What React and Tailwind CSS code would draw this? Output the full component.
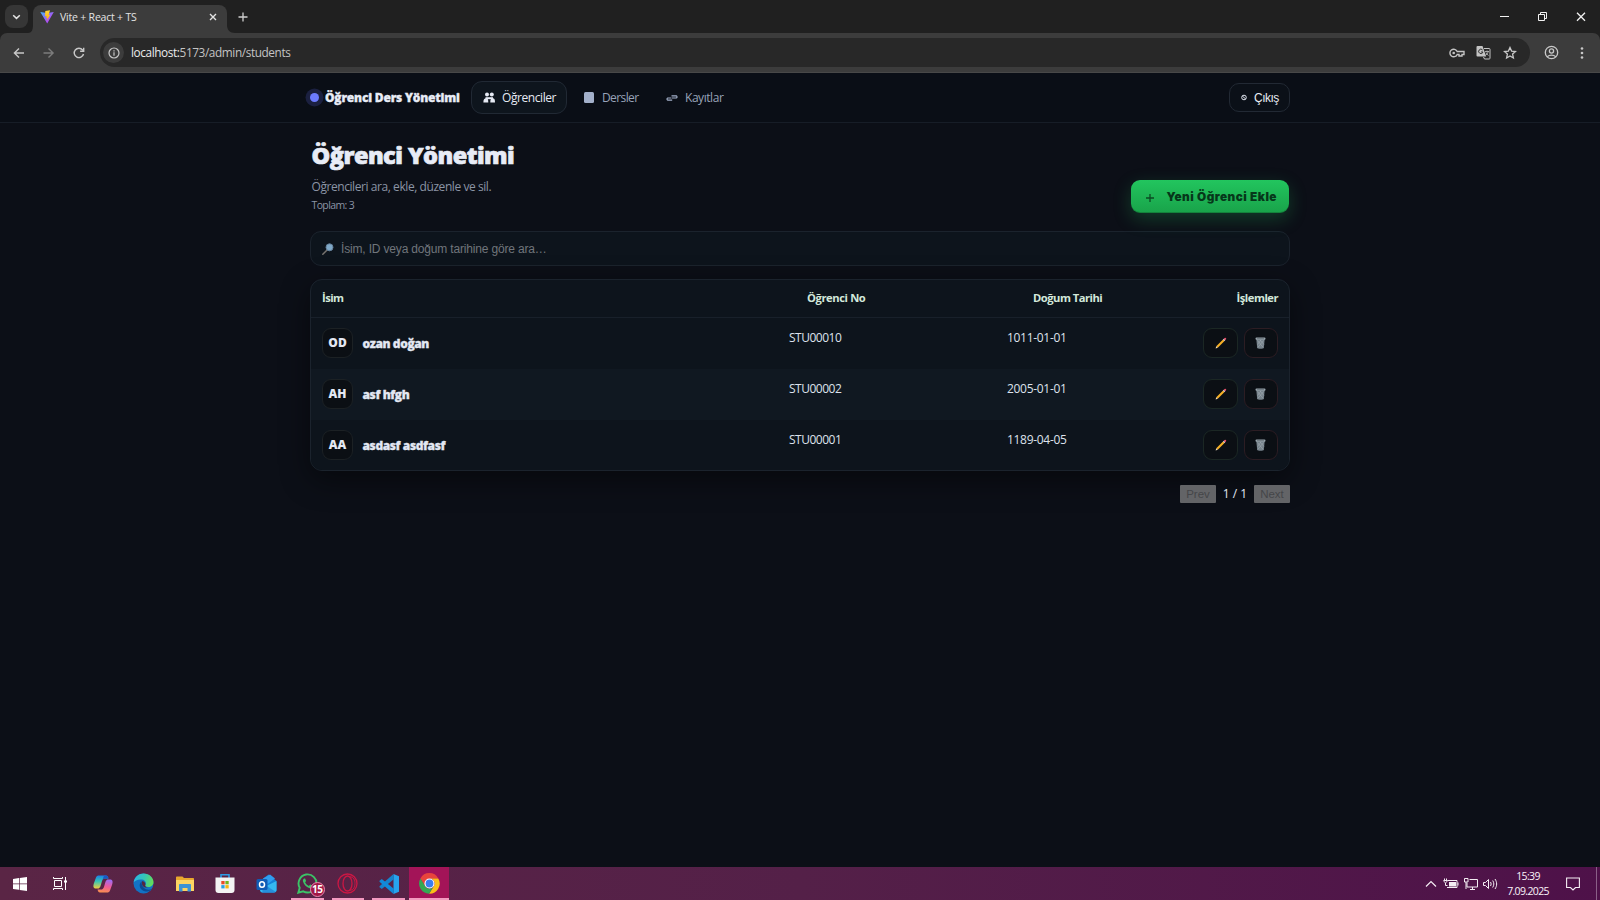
import React from "react";

const students = [
  { initials: "OD", name: "ozan doğan", no: "STU00010", birth: "1011-01-01" },
  { initials: "AH", name: "asf hfgh", no: "STU00002", birth: "2005-01-01" },
  { initials: "AA", name: "asdasf asdfasf", no: "STU00001", birth: "1189-04-05" },
];

function ViteLogo() {
  return (
    <svg width="14" height="14" viewBox="0 0 14 14">
      <defs>
        <linearGradient id="vt" x1="0" y1="0" x2="1" y2="1">
          <stop offset="0" stopColor="#41b6f5" />
          <stop offset="0.6" stopColor="#a855f7" />
          <stop offset="1" stopColor="#bd34fe" />
        </linearGradient>
        <linearGradient id="vy" x1="0" y1="0" x2="0" y2="1">
          <stop offset="0" stopColor="#ffd83b" />
          <stop offset="1" stopColor="#ffa800" />
        </linearGradient>
      </defs>
      <path d="M.3 2 7.2 13.6 13.8 2 7.3 3.1Z" fill="url(#vt)" />
      <path d="M10 .2 5.3 1.1 5 6.3l1.6-.3-.4 2.2 1.3-.4-.7 3.4 3.3-6.4-1.5.3Z" fill="url(#vy)" />
    </svg>
  );
}

function TabStrip() {
  return (
    <div className="flex h-[33px] items-start bg-[#202020]">
      <div className="ml-[5px] mt-[5px] flex h-[23px] w-[23px] items-center justify-center rounded-[8px] bg-[#363636]">
        <svg width="9" height="6" viewBox="0 0 9 6" fill="none" stroke="#e3e3e3" strokeWidth="1.5"><path d="m1.2 1.2 3.3 3.2 3.3-3.2" /></svg>
      </div>
      <svg className="mt-[25px]" width="5" height="8" viewBox="0 0 5 8"><path d="M5 0v8H0c3.500 0 5-3 5-8Z" fill="#3c3c3c" /></svg>
      <div className="mt-[5px] flex h-[28px] w-[194px] items-center rounded-t-[8px] bg-[#3c3c3c] pb-[4px] pl-[7px] pr-[10px]">
        <ViteLogo />
        <span className="ml-[6px] mt-[1px] grow whitespace-nowrap text-[10.5px] tracking-[-0.2px] text-[#e3e3e3]">Vite + React + TS</span>
        <svg width="8" height="8" viewBox="0 0 8 8" stroke="#e3e3e3" strokeWidth="1.4"><path d="m1 1 6 6M7 1 1 7" /></svg>
      </div>
      <svg className="mt-[25px]" width="8" height="8" viewBox="0 0 8 8"><path d="M0 0c0 5 3 8 8 8H0Z" fill="#3c3c3c" /></svg>
      <svg className="ml-[3px] mt-[12px]" width="10" height="10" viewBox="0 0 10 10" stroke="#cfcfcf" strokeWidth="1.3"><path d="M5 .5v9M.5 5h9" /></svg>
      <div className="grow" />
      <svg className="mt-[12px]" width="100" height="10" viewBox="0 0 100 10" fill="none" stroke="#f2f2f2" strokeWidth="1">
        <path d="M0 4.500h9" />
        <path d="M38.500 2.500h6v6h-6zM40.500 2.500v-2h6v6h-2" />
        <path d="m77 .8 8 8M85 .8l-8 8" strokeWidth="1.3" />
      </svg>
    </div>
  );
}

function Toolbar() {
  return (
    <div className="bg-[#202020]">
      <div className="flex h-[40px] items-center rounded-t-[7px] border-b border-[#484848] bg-[#3c3c3c]">
        <svg className="ml-[13px]" width="12" height="12" viewBox="0 0 12 12" fill="none" stroke="#c8c8c8" strokeWidth="1.4"><path d="M11 6H1.500M6 1.400 1.400 6 6 10.600" /></svg>
        <svg className="ml-[18px]" width="12" height="12" viewBox="0 0 12 12" fill="none" stroke="#7c7c7c" strokeWidth="1.4"><path d="M.5 6H10M5.500 1.400 10.100 6l-4.600 4.600" /></svg>
        <svg className="ml-[18px]" width="12" height="12" viewBox="0 0 12 12" fill="none" stroke="#c8c8c8" strokeWidth="1.4"><path d="M10.500 7A4.700 4.700 0 1 1 9.600 3l1 1" /><path d="M10.700.7v3.600H7.100" /></svg>
        <div className="ml-[15px] flex h-[29px] w-[1430px] items-center rounded-full bg-[#282828]">
          <div className="ml-[3px] flex h-[21px] w-[21px] items-center justify-center rounded-full bg-[#3c3c3c]">
            <svg width="12" height="12" viewBox="0 0 12 12" fill="none" stroke="#c8c8c8" strokeWidth="1.2"><circle cx="6" cy="6" r="5" /><path d="M6 5.300v3.400M6 3.200v1.300" /></svg>
          </div>
          <span className="ml-[7px] whitespace-nowrap text-[11.8px] tracking-[-0.4px] text-[#c4c4c4]"><span className="text-[#ececec]">localhost:</span>5173/admin/students</span>
          <div className="grow" />
          <svg width="16" height="10" viewBox="0 0 16 10" fill="none" stroke="#c4c4c4" strokeWidth="1.4"><path d="M8.200 3.500a3.800 3.800 0 1 0 0 3H10V8h3V6.500h2v-3Z" /><circle cx="4.700" cy="5" r="1.300" fill="#c4c4c4" stroke="none" /></svg>
          <svg className="ml-[11px]" width="15" height="15" viewBox="0 0 15 15">
            <path d="M1.500 1h5l3.700 10.500H1.500A1 1 0 0 1 .5 10.500V2a1 1 0 0 1 1-1Z" fill="#c4c4c4" />
            <path d="M8 3.500h5.200a.8.800 0 0 1 .8.800v8.900a.8.800 0 0 1-.8.800H8.500l-1-2" fill="none" stroke="#c4c4c4" />
            <path d="M6.600 5A2.200 2.200 0 1 0 7 7H5" fill="none" stroke="#333" strokeWidth="1" />
            <path d="M9 6.500h4M11 5.500v1M12.300 6.500c-.3 1.500-1.300 2.700-2.300 3.500M10 7.500c.5 1.300 1.400 2.200 2.500 3" fill="none" stroke="#c4c4c4" strokeWidth=".8" />
          </svg>
          <svg className="ml-[12px] mr-[13px]" width="14" height="14" viewBox="0 0 14 14" fill="none" stroke="#c8c8c8" strokeWidth="1.3"><path d="m7 1.500 1.600 3.600 3.900.4-2.900 2.600.8 3.900L7 10l-3.400 2 .8-3.900L1.500 5.500l3.900-.4Z" /></svg>
        </div>
        <svg className="ml-[14px]" width="15" height="15" viewBox="0 0 15 15" fill="none" stroke="#c8c8c8" strokeWidth="1.3"><circle cx="7.500" cy="7.500" r="6.200" /><circle cx="7.500" cy="6" r="2.100" /><path d="M3.200 11.800c2.400-2.200 6.200-2.200 8.600 0" /></svg>
        <svg className="ml-[21px]" width="4" height="14" viewBox="0 0 4 14" fill="#c8c8c8"><circle cx="2" cy="2.500" r="1.300" /><circle cx="2" cy="7" r="1.300" /><circle cx="2" cy="11.500" r="1.300" /></svg>
      </div>
    </div>
  );
}

function NavBar() {
  return (
    <header className="h-[50px] border-b border-[#171d27] bg-[#0a0e16]">
      <div className="mx-auto flex h-[49px] w-[980px] items-center">
        <div className="ml-[-0.500px] h-[9px] w-[9px] rounded-full bg-[#6c7bff] shadow-[0_0_0_4.500px_#1b2040]" />
        <span className="ml-[6.500px] w-[146px] whitespace-nowrap text-[12px] font-extrabold tracking-[-0.2px] text-[#e8ecf6] [-webkit-text-stroke:0.3px_#e8ecf6]">Öğrenci Ders Yönetimi</span>
        <nav className="flex items-center text-[12px] text-[#98a3b8]">
          <div className="flex h-[33px] w-[96px] items-center whitespace-nowrap rounded-[11px] border border-[#212934] bg-[#0e151d] pl-[11px] text-[#e6eaf4]">
            <svg className="mr-[7px] shrink-0" width="12" height="11" viewBox="0 0 12 11" fill="#e6eaf4"><circle cx="4" cy="2.600" r="2" /><circle cx="8.800" cy="2.400" r="2" /><path d="M2.500 5.200h7.500v2H2.500Z" /><path d="M.4 10.400c0-3 .8-4.200 3-4.200 1.500 0 1.900 1.600 1.900 4.200ZM7.300 10.400c0-2.800.6-4.200 2.500-4.200 1.700 0 2.200 1.400 2.200 4.200Z" /></svg>
            <span className="tracking-[-0.42px]">Öğrenciler</span>
          </div>
          <div className="ml-[17px] flex items-center">
            <div className="h-[11px] w-[10px] rounded-[1.500px] bg-[#a3b0ca]" />
            <span className="ml-[8px] w-[64px] tracking-[-0.6px]">Dersler</span>
            <svg width="12" height="8" viewBox="0 0 12 8" fill="none" stroke="#a3b0ca" strokeWidth="1.200"><path d="M5.500 4H1.700a1.200 1.200 0 0 0 0 2.200h4.500M5.500 1.800h4.800a1.200 1.200 0 0 1 0 2.200H6" /></svg>
            <span className="ml-[7px] tracking-[-0.45px]">Kayıtlar</span>
          </div>
        </nav>
        <div className="grow" />
        <button className="flex h-[29px] w-[61px] items-center rounded-[10px] border border-[#222934] bg-[#0b1018] pl-[11px] font-['Liberation_Sans',Arial,sans-serif] text-[12px] tracking-[-0.5px] text-[#e8ecf4]">
          <svg className="mr-[7px] shrink-0" width="6" height="7" viewBox="0 0 6 7" fill="none" stroke="#dfe4ee"><circle cx="3" cy="3.500" r="2.300" /><path d="m1.300 2 3.400 3" /></svg>
          Çıkış
        </button>
      </div>
    </header>
  );
}

function Pencil() {
  return (
    <svg width="12" height="12" viewBox="0 0 12 12">
      <path d="m2 10 7-7" stroke="#f6b026" strokeWidth="2.200" />
      <path d="m9.500 2.500.7-.7" stroke="#e04f68" strokeWidth="2" strokeLinecap="round" />
      <path d="m8.700 3.300.7-.7" stroke="#c9d3df" strokeWidth="2.200" />
      <path d="m.6 11.400.7-2.200 1.500 1.500Z" fill="#f1dcc0" />
    </svg>
  );
}

function Trash() {
  return (
    <svg width="11" height="12" viewBox="0 0 11 12">
      <path d="M1.300 2h8.400l-.9 9.100c-.1.900-6.500.9-6.600 0Z" fill="#76828b" />
      <path d="m2.500 3.500 5.700 7M5 3l4 4.500M8.500 3.500l-5.700 7M6 3 2.500 7.500" stroke="#a6b0b7" strokeWidth=".5" />
      <rect x=".5" y=".6" width="10" height="2.200" rx="1" fill="#97a3ab" />
      <path d="M2 1.700h7" stroke="#59646c" strokeWidth=".7" />
    </svg>
  );
}

function StudentTable() {
  return (
    <section className="mt-[13px] h-[192px] overflow-hidden rounded-[12px] border border-[#1b232d] bg-[#0d141c] shadow-[0_9px_30px_rgba(0,0,0,0.45)]">
      <div className="flex h-[38px] items-center border-b border-[#18202a] pl-[11px] text-[11.200px] font-bold text-[#d3e8db]">
        <div className="w-[485px] tracking-[-0.55px]">İsim</div>
        <div className="w-[226px] tracking-[-0.4px]">Öğrenci No</div>
        <div className="grow tracking-[-0.5px]">Doğum Tarihi</div>
        <div className="mr-[11px] tracking-[-0.5px]">İşlemler</div>
      </div>
      {students.map((s) => (
        <div key={s.no} className="flex h-[51px] px-[11px] pt-[10px] even:bg-[#0d141c] odd:bg-[#101821]">
          <div className="flex w-[467px] items-start">
            <div className="flex h-[30px] w-[31px] items-center justify-center rounded-[9px] border border-[#1c2124] bg-[#0b0f14] text-[12px] font-extrabold text-[#e3e8f3]">{s.initials}</div>
            <div className="ml-[9.500px] mt-[7px] text-[12px] leading-[17px] font-extrabold tracking-[-0.4px] text-[#e3e8f3] [-webkit-text-stroke:0.3px_#e3e8f3]">{s.name}</div>
          </div>
          <div className="w-[218px] text-[12px] leading-[19px] tracking-[-0.5px] text-[#dde2ec]">{s.no}</div>
          <div className="grow text-[12px] leading-[19px] tracking-[-0.3px] text-[#dde2ec]">{s.birth}</div>
          <div className="flex gap-[6px]">
            <button className="flex h-[30px] w-[35px] items-center justify-center rounded-[9px] border border-[#1b2724] bg-[#0b0f14]"><Pencil /></button>
            <button className="flex h-[30px] w-[34px] items-center justify-center rounded-[9px] border border-[#2c1d23] bg-[#0b0f14] pr-[1px]"><Trash /></button>
          </div>
        </div>
      ))}
    </section>
  );
}

function Page() {
  return (
    <main className="grow bg-[#0c0f17]">
      <div className="mx-auto w-[980px]">
        <div className="flex h-[108px] justify-between">
          <div className="pl-[1.500px]">
            <h1 className="mt-[16px] whitespace-nowrap text-[23.500px] leading-[32px] font-extrabold tracking-[-0.53px] text-[#e8ecf6] [-webkit-text-stroke:0.7px_#e8ecf6]">Öğrenci Yönetimi</h1>
            <p className="mt-[7px] text-[12px] leading-[17px] tracking-[-0.43px] text-[#8b94a5]">Öğrencileri ara, ekle, düzenle ve sil.</p>
            <p className="mt-[3px] text-[10.500px] leading-[15px] tracking-[-0.62px] text-[#8b94a5]">Toplam: 3</p>
          </div>
          <button className="mr-[1.500px] mt-[57px] flex h-[33px] w-[157.500px] items-center whitespace-nowrap rounded-[9px] bg-linear-to-b from-[#22c55e] to-[#19a34a] pl-[15px] font-['Inter','Liberation_Sans',sans-serif] text-[11.800px] font-black text-[#06371a] shadow-[0_6px_18px_rgba(34,197,94,0.25),inset_0_-1px_0_rgba(0,0,0,0.2)]">
            <svg className="mr-[12.500px] mt-[2px]" width="8" height="8" viewBox="0 0 8 8" stroke="#0b4a22" strokeWidth="1.300"><path d="M4 0v8M0 4h8" /></svg>
            <span className="mt-[2px] tracking-[0.47px]">Yeni Öğrenci Ekle</span>
          </button>
        </div>
        <div className="flex h-[35px] items-center rounded-[11px] border border-[#1b232d] bg-[#0d141c] pl-[11px]">
          <svg width="12" height="12" viewBox="0 0 12 12"><path d="m.8 11.200 4-4" stroke="#77736f" strokeWidth="1.500" strokeLinecap="round" /><circle cx="7.500" cy="4.300" r="3.500" fill="#7fa9c9" stroke="#64809a" /></svg>
          <span className="ml-[7px] font-['Liberation_Sans',Arial,sans-serif] text-[12px] tracking-[-0.17px] text-[#70757b]">İsim, ID veya doğum tarihine göre ara…</span>
        </div>
        <StudentTable />
        <div className="mt-[13px] flex items-center justify-end text-[12px] text-[#e3e8f3]">
          <button className="h-[18px] w-[36px] rounded-[1px] bg-[#636467] font-['Liberation_Sans',Arial,sans-serif] text-[11.500px] leading-[18px] text-[#454649]">Prev</button>
          <span className="w-[38px] pt-[1px] text-center leading-[18px] font-medium">1 / 1</span>
          <button className="h-[18px] w-[36px] rounded-[1px] bg-[#636467] font-['Liberation_Sans',Arial,sans-serif] text-[11.500px] leading-[18px] text-[#454649]">Next</button>
        </div>
      </div>
    </main>
  );
}

const Slot = ({ children, running, active }) => (
  <div className={active ? "relative flex h-[33px] w-[40px] items-center justify-center bg-[#a31458]" : "relative flex h-[33px] w-[40.850px] items-center justify-center"}>
    {children}
    {running && <div className={active ? "absolute inset-x-0 bottom-0 h-[2px] bg-[#f39ac0]" : "absolute inset-x-[4px] bottom-0 h-[2px] bg-[#f39ac0]"} />}
  </div>
);

function Taskbar() {
  return (
    <footer className="flex h-[33px] items-center bg-linear-to-r from-[#5a2545] via-[#542048] to-[#4e1149]">
      <div className="ml-[-0.500px] w-[40px]"><Slot><svg width="14" height="14" viewBox="0 0 14 14" fill="#fff"><path d="M0 2l6-.9v5.500H0zM6.700 1 14 0v6.600H6.700zM0 7.300h6v5.500L0 12zM6.700 7.300H14V14l-7.300-1z" /></svg></Slot></div>
      <div className="w-[40px]"><Slot><svg width="14" height="13" viewBox="0 0 14 13" fill="none" stroke="#fff"><path d="M1.500 3.500h7v6h-7zM.5 0v1.500h9V0M.5 13v-1.500h9V13M12.500 0v13" /><path d="M11 3.500h3v2h-3z" fill="#fff" stroke="none" /></svg></Slot></div>
      <div className="ml-[3px] flex">
        <Slot>
          <svg width="20" height="20" viewBox="0 0 20 20">
            <defs>
              <linearGradient id="c1" x1="0" y1="0" x2="0" y2="1"><stop offset="0" stopColor="#1a80e8" /><stop offset=".45" stopColor="#35c5b5" /><stop offset="1" stopColor="#f2cf3e" /></linearGradient>
              <linearGradient id="c2" x1="0.500" y1="0" x2="0.300" y2="1"><stop offset="0" stopColor="#a06bf0" /><stop offset=".5" stopColor="#ee5a9a" /><stop offset="1" stopColor="#fa914b" /></linearGradient>
            </defs>
            <path d="M6 1.500h7c1.500 0 2 1 2.500 3H11C9.500 5 9 7 8.300 9.500S7 14.500 5 14.500H3C0 14.500 0 12 1 9L3 3.500C3.600 2 4.500 1.500 6 1.500Z" fill="url(#c1)" />
            <path d="M14 18.500H7c-1.500 0-2-1-2.500-3H9c1.500-.5 2-2.500 2.700-5s1.300-5 3.300-5h2c3 0 3 2.500 2 5.500l-2 5.500c-.6 1.500-1.500 2-3 2Z" fill="url(#c2)" />
            <path d="M11 1.500h2c1.500 0 2 1 2.500 3H11L9.500 6Z" fill="#1957c9" />
          </svg>
        </Slot>
        <Slot>
          <svg width="21" height="21" viewBox="0 0 21 21">
            <defs><linearGradient id="e1" x1="0" y1="0.200" x2="1" y2="0.400"><stop offset="0" stopColor="#2bb4e8" /><stop offset=".55" stopColor="#35c7b4" /><stop offset="1" stopColor="#63dc5b" /></linearGradient></defs>
            <circle cx="10.500" cy="10.500" r="10" fill="#1272c4" />
            <path d="M.6 9.500C1.500 3.500 6 .5 10.500.5c6 0 10 4.300 10 8.500 0 3.500-2.600 5-5 5-3 0-3.700-1.200-3-2 1-1.200.5-5-3.500-5.500C5 6 1.500 7.500.6 9.500Z" fill="url(#e1)" />
            <path d="M8.500 8.500c-3.500 2.500-2 9.500 4.500 10 2.500.2 5-1 6-2.500-5 2-10.500-.5-10.500-7.500Z" fill="#0b4a94" />
            <path d="M9 8.300c2.300-.3 4 2.300 3.200 3.900-.4.700.3 1.800 2.800 1.900-3.500 1.800-7-1.600-6-5.800Z" fill="#54263f" />
          </svg>
        </Slot>
        <Slot>
          <svg width="18" height="16" viewBox="0 0 18 16"><path d="M0 1.500C0 .7.500.5 1 .5h5.500L8 2h9c.6 0 1 .3 1 1v12H0Z" fill="#e9a82e" /><path d="M0 4h18v11H0Z" fill="#fcd462" /><path d="M3 15.500V9c0-.6.400-1 1-1h10c.6 0 1 .400 1 1v6.500h-3.500V12h-5v3.500Z" fill="#3c93d4" /></svg>
        </Slot>
        <Slot>
          <svg width="20" height="21" viewBox="0 0 20 21"><path d="M6 5V1.700h8V5" fill="none" stroke="#2d9be6" strokeWidth="1.600" /><path d="M.5 4.500h19V17c0 2-1 3-3 3h-13c-2 0-3-1-3-3Z" fill="#f3f3f3" /><path fill="#ea4a24" d="M6.300 8h3.300v3.300H6.300z" /><path fill="#71b51c" d="M10.400 8h3.300v3.300h-3.300z" /><path fill="#28a0e2" d="M6.300 12.100h3.300v3.300H6.300z" /><path fill="#f7b50c" d="M10.400 12.100h3.300v3.300h-3.300z" /></svg>
        </Slot>
        <Slot>
          <svg width="21" height="19" viewBox="0 0 21 19"><path d="M4 7 12.500.5 20.500 7v9c0 1.500-1 2.500-2.500 2.500H6.500C5 18.500 4 17.500 4 16Z" fill="#1481d8" /><path d="M7 4.500 14 .5l5 4-8 6Z" fill="#2f9df0" /><path d="m4 15 16.500-8v9c0 1.500-1 2.500-2.500 2.500H6.500C5 18.500 4 17 4 15Z" fill="#35b8f1" /><path d="m6 9 14 9-2 .5H6.500Z" fill="#1668ca" opacity=".5" /><rect x=".5" y="5" width="11" height="11" rx="1.500" fill="#105bb5" /><ellipse cx="6" cy="10.500" rx="2.500" ry="2.800" fill="none" stroke="#fff" strokeWidth="1.500" /></svg>
        </Slot>
        <Slot running>
          <svg width="21" height="21" viewBox="0 0 21 21"><path d="m1.300 19.700 1.400-4.900a9 9 0 1 1 3.500 3.500Z" fill="none" stroke="#3bc367" strokeWidth="1.900" /><path d="M7.200 5.500c-1 .6-1.600 1.600-1.200 3 .9 3.300 3.500 5.900 6.800 6.800 1.300.4 2.700-.4 3.100-1.700v-.9l-2.700-1.300-1.300 1.500c-1.700-.7-3-2-3.800-3.600l1-1.300-1-2.500Z" fill="#3bc367" /></svg>
          <div className="absolute left-[23px] top-[15px] flex h-[15px] w-[15px] items-center justify-center rounded-full border border-[#e88bb1] bg-[#a31846] text-[10px] font-bold tracking-[-0.6px] text-white">15</div>
        </Slot>
        <Slot running>
          <svg width="21" height="21" viewBox="0 0 21 21" fill="none" stroke="#cb1744" strokeWidth="1.300"><circle cx="10.500" cy="10.500" r="9.500" /><ellipse cx="10.500" cy="10.500" rx="4.500" ry="7.500" /><path d="M12.500 3.700c4.500 0 5.500 4 5.500 6.800s-1 6.800-5.500 6.800" strokeWidth="1" /></svg>
        </Slot>
        <Slot running>
          <svg width="20" height="20" viewBox="0 0 20 20"><path d="M14.500 0 20 2.300v15.400L14.500 20Z" fill="#27a4ee" /><path d="m14.500 0 .3 5.300L2.800 15 .5 13.300v-1Z" fill="#1683cc" /><path d="m14.500 20 .3-5.300L2.800 5 .5 6.700v1Z" fill="#118ada" /></svg>
        </Slot>
        <Slot running active>
          <svg width="21" height="21" viewBox="0 0 21 21"><path d="M1.400 5.400a10.200 10.200 0 0 1 17.900 0h-8.800L6.100 13Z" fill="#e8453c" /><path d="M19.300 5.400a10.200 10.200 0 0 1-9.200 15.300l4.800-7.700a5 5 0 0 0-4.400-7.600Z" fill="#fbbf18" /><path d="M1.400 5.400A10.200 10.200 0 0 0 10.100 20.700L14.900 13a5 5 0 0 1-8.800 0Z" fill="#34a853" /><circle cx="10.500" cy="10.500" r="5" fill="#fff" /><circle cx="10.500" cy="10.500" r="3.900" fill="#3a7df0" /></svg>
        </Slot>
      </div>
      <div className="grow" />
      <svg width="74" height="14" viewBox="0 0 74 14" fill="none" stroke="#f4edf3" strokeWidth="1">
        <path d="m2 9.500 5-5 5 5" strokeWidth="1.200" />
        <path d="M23.500 3.500h9.500v7H23M34 5.500v3M19.500 3.500h4M20.500 1.500v2M22.500 1.500v2M20 3.500c0 3 3 3 3 0M21.500 6v2.500h2" /><path d="M25 5h7v4.500h-7z" fill="#f4edf3" stroke="none" />
        <path d="M45.500 2.500h8v7.500h-10.500V6M46 12.500h5M48.500 10v2.500M40.500 1.500h3.500v3.500h-3.500zM42 5v7" />
        <path d="M59.500 5.500h2l3-3v9l-3-3h-2ZM66.500 5c.8 1.300.8 2.700 0 4M68.700 3.500c1.500 2.300 1.500 4.700 0 7M71 2c2.200 3.300 2.200 6.700 0 10" />
      </svg>
      <div className="ml-[7px] w-[46px] whitespace-nowrap text-center text-[10.500px] leading-[15px] tracking-[-0.65px] text-[#fbf4fa]">
        <div>15:39</div>
        <div>7.09.2025</div>
      </div>
      <svg className="ml-[15px]" width="14" height="14" viewBox="0 0 14 14" fill="none" stroke="#f4edf3" strokeWidth="1.100"><path d="M.6 1h12.800v9.500H9.500L7 13l-2.500-2.500H.6Z" /></svg>
      <div className="ml-[16px] mr-[3px] h-[33px] w-[1px] bg-[#8a5f87]" />
    </footer>
  );
}

export default function App() {
  return (
    <div className="flex h-[900px] w-[1600px] flex-col overflow-hidden bg-[#0c0f17] font-['Open_Sans','Noto_Sans',sans-serif]">
      <TabStrip />
      <Toolbar />
      <NavBar />
      <Page />
      <Taskbar />
    </div>
  );
}
